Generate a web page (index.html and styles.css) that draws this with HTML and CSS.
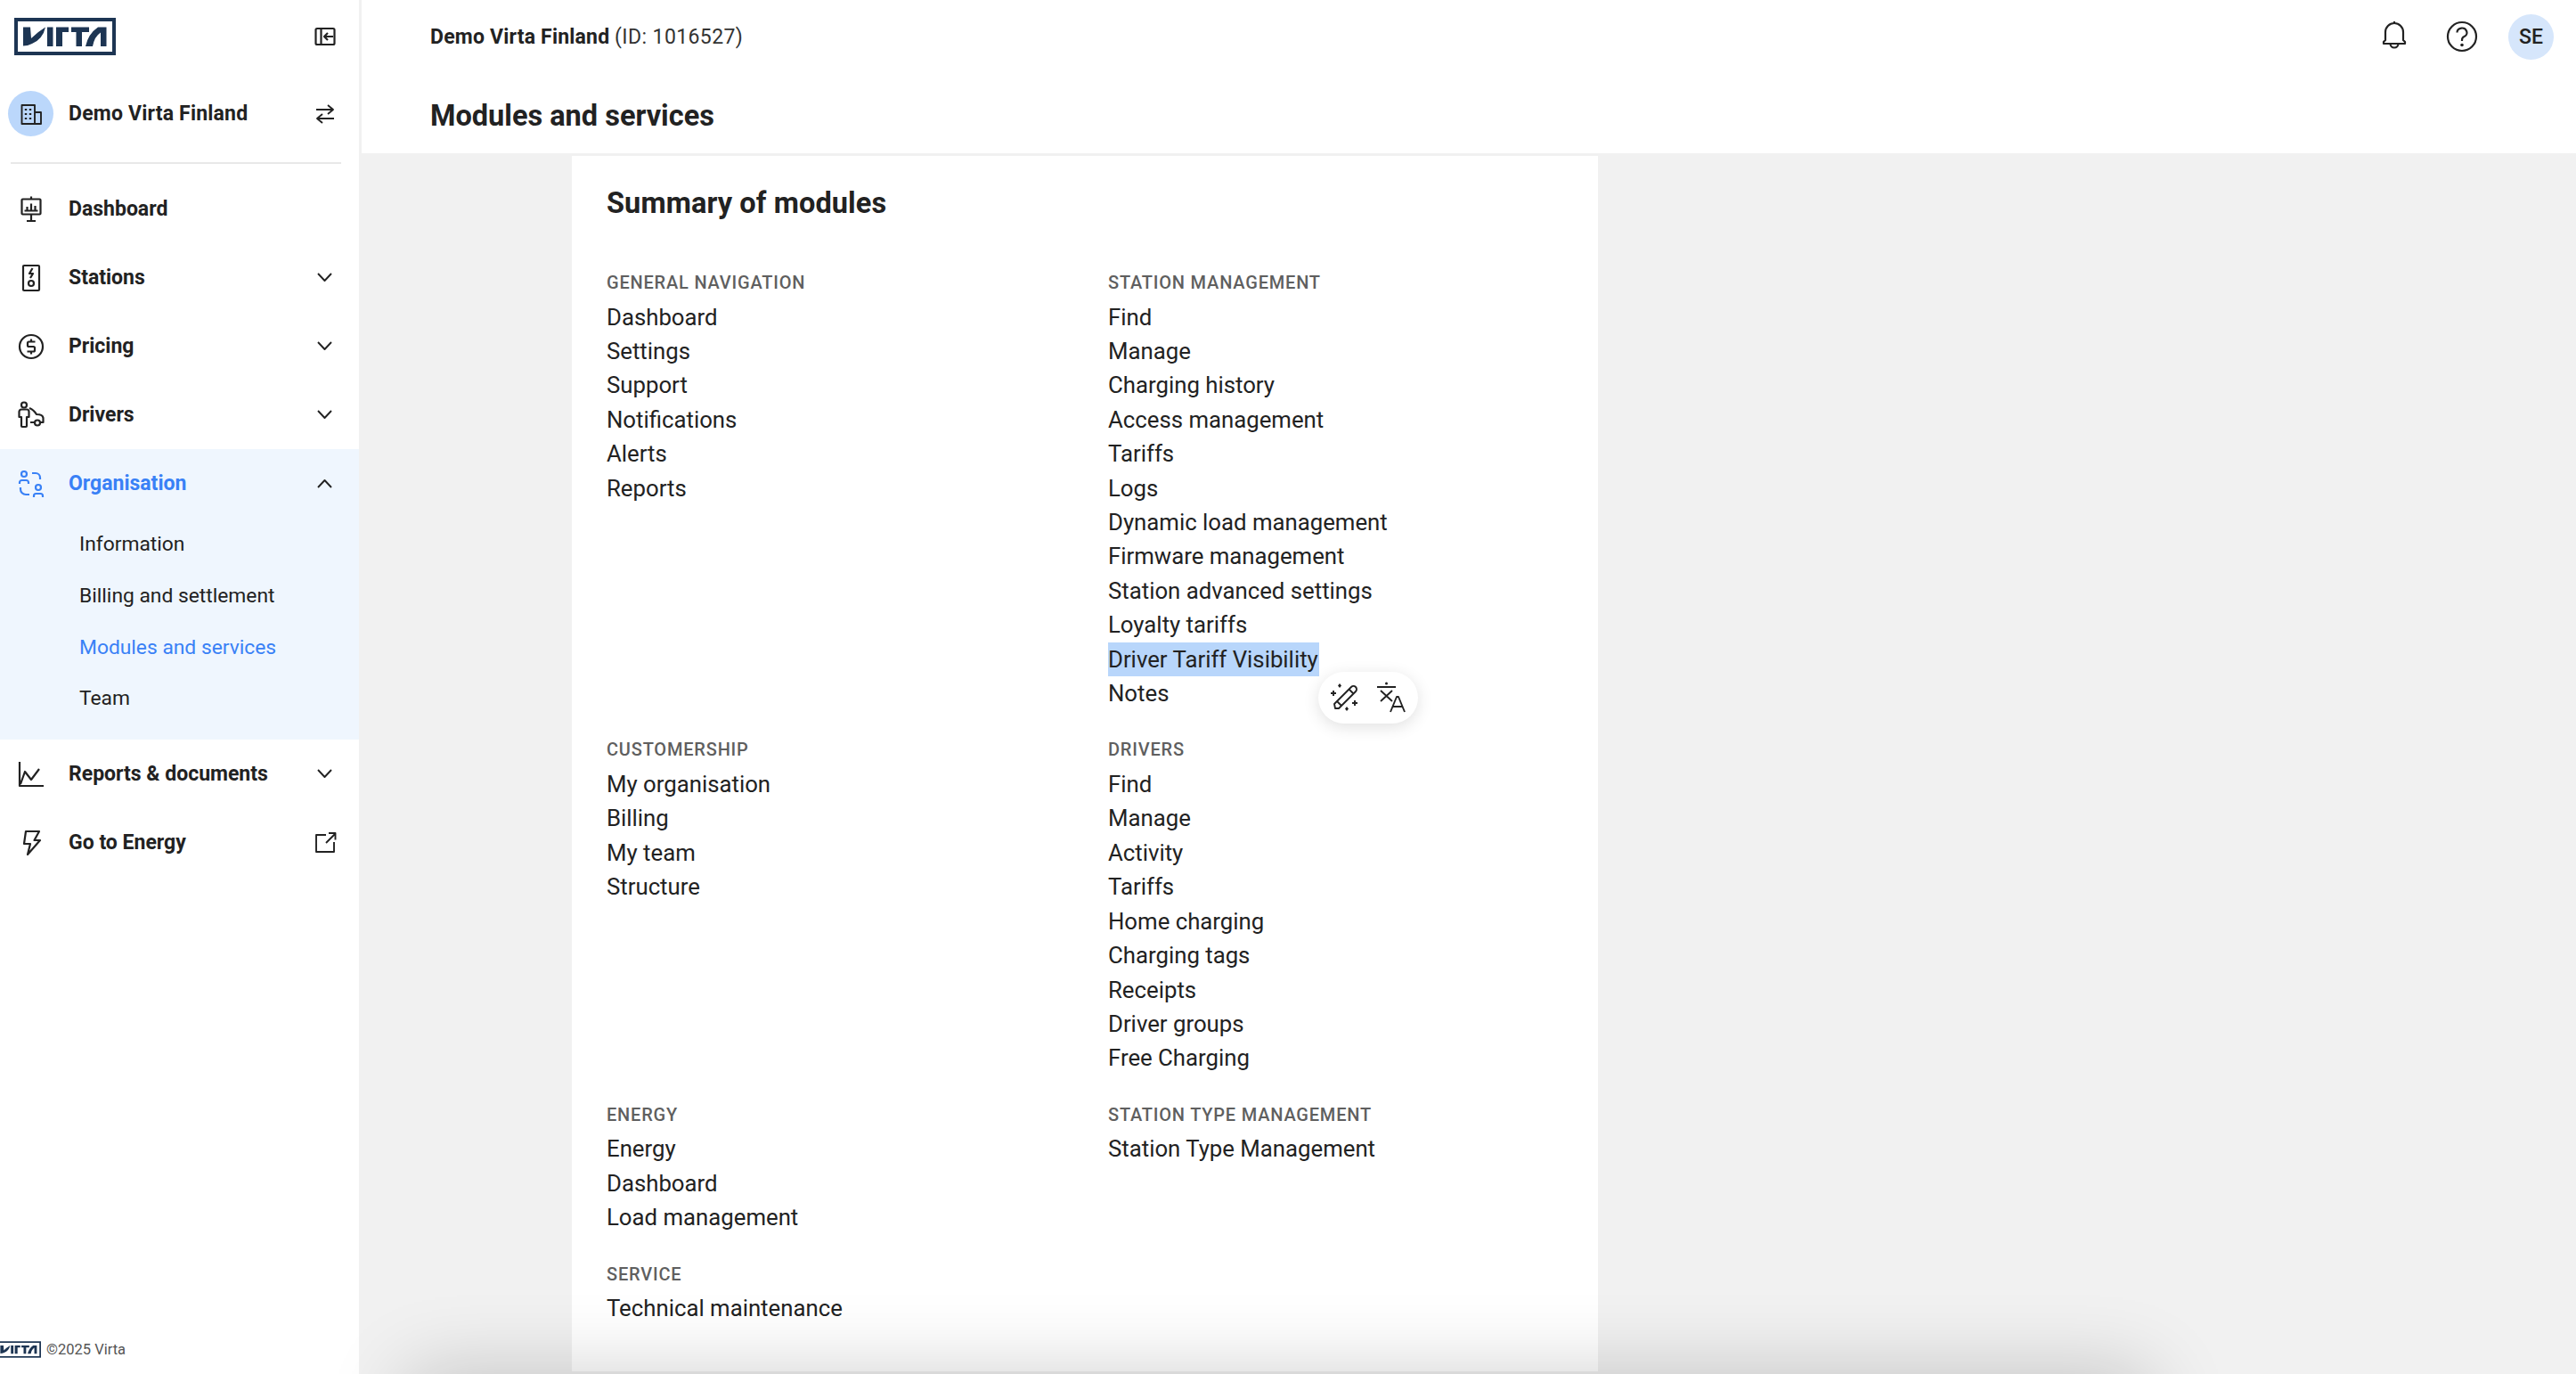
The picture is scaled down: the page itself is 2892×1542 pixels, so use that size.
FILE: index.html
```html
<!DOCTYPE html>
<html lang="en">
<head>
<meta charset="utf-8">
<title>Modules and services</title>
<link rel="stylesheet" href="styles.css">
</head>
<body>
<svg class="defs" aria-hidden="true"><symbol id="virta" viewBox="0 0 114 42"><rect x="2" y="2" width="110" height="38" fill="none" stroke="#1d3553" stroke-width="4"/><path fill="#1d3553" d="M10 10.500H18L19 23Q26 16 35 10.500 32 24 20 29 15 31.500 10 31.500ZM37 10.500H43.500V32H37ZM47 10.500H61V16H54V32H47ZM64 10.500H84V16H76V32H69.500V16H64ZM80 32Q83 18 94 10.500H103.500V32H97V16.500Q90 21 88 32Z"/></symbol></svg>
<div class="app">
  <aside class="sidebar">
    <div class="brand">
      <svg class="logo"><use href="#virta"/></svg>
      <svg class="i32" viewBox="0 0 32 32"><g class="st"><rect x="5.500" y="7" width="21" height="18" rx="1.500"/><path d="M11.500 7V25M25 16H15M19 12L15 16 19 20"/></g></svg>
    </div>
    <div class="org">
      <span class="org-badge"><svg class="i32" viewBox="0 0 32 32"><g class="st thin"><path d="M5.500 27V6H20V27ZM20 14H27V27H20Z"/><path class="dots" d="M10 10V12M15 10V12M10 15V17M15 15V17M10 20V22M15 20V22"/></g></svg></span>
      <span class="org-name">Demo Virta Finland</span>
      <svg class="i32" viewBox="0 0 32 32"><g class="st thin"><path d="M6 11H25M19 6L25 11 19 16M26 21H7M13 16L7 21 13 26"/></g></svg>
    </div>
    <div class="divider"></div>
    <nav class="nav">
      <a class="nav-item"><svg class="i32" viewBox="0 0 32 32"><g class="st"><rect x="5.500" y="4.500" width="21" height="17" rx="1"/><path d="M16 1.500V4.500M16 21.500V29M11 29H21M8.500 17.500H23.500M11.500 17V13M16 17V9.500M20.500 17V12"/></g></svg><span class="nav-label">Dashboard</span></a>
      <a class="nav-item"><svg class="i32" viewBox="0 0 32 32"><g class="st"><rect x="7" y="2" width="18" height="28" rx="1"/><path d="M17.500 5L14 11H18L15 16"/><circle cx="16" cy="22" r="3"/></g></svg><span class="nav-label">Stations</span><svg class="i32" viewBox="0 0 32 32"><path class="st thin" d="M8 11L15.500 19 23 11"/></svg></a>
      <a class="nav-item"><svg class="i32" viewBox="0 0 32 32"><g class="st"><circle cx="16" cy="16" r="13"/><path d="M20.500 10.500H13.500A1.500 1.500 0 0 0 12 12V14.500A1.500 1.500 0 0 0 13.500 16H18.500A1.500 1.500 0 0 1 20 17.500V20A1.500 1.500 0 0 1 18.500 21.500H11.500M16 7.500V10.500M16 21.500V24.500"/></g></svg><span class="nav-label">Pricing</span><svg class="i32" viewBox="0 0 32 32"><path class="st thin" d="M8 11L15.500 19 23 11"/></svg></a>
      <a class="nav-item"><svg class="i32" viewBox="0 0 32 32"><g class="st"><circle cx="8" cy="4.500" r="3"/><path d="M2.500 12A2.500 2.500 0 0 1 5 9.500H11A2.500 2.500 0 0 1 13.500 12V18H11V28A1 1 0 0 1 10 29H6A1 1 0 0 1 5 28V18H2.500ZM14 8Q19 10 22 15 29 15 29.500 19V24H26M15 24H20"/><circle cx="23" cy="24.500" r="3"/></g></svg><span class="nav-label">Drivers</span><svg class="i32" viewBox="0 0 32 32"><path class="st thin" d="M8 11L15.500 19 23 11"/></svg></a>
      <div class="nav-group">
        <a class="nav-item active"><svg class="i32" viewBox="0 0 32 32"><g class="st"><circle cx="8" cy="5" r="3"/><path d="M3 16V14.500A2.500 2.500 0 0 1 5.500 12H10.500A2.500 2.500 0 0 1 13 14.500V16M17 4H21A5 5 0 0 1 26 9V11M4 20V22A6 6 0 0 0 10 28H14"/><circle cx="24" cy="20" r="3"/><path d="M19 31V29.500A2.500 2.500 0 0 1 21.500 27H26.500A2.500 2.500 0 0 1 29 29.500V31"/></g></svg><span class="nav-label">Organisation</span><svg class="i32" viewBox="0 0 32 32"><path class="st thin dark" d="M8 20L15.500 12 23 20"/></svg></a>
        <ul class="subnav">
          <li>Information</li>
          <li>Billing and settlement</li>
          <li class="current">Modules and services</li>
          <li>Team</li>
        </ul>
      </div>
      <a class="nav-item"><svg class="i32" viewBox="0 0 32 32"><g class="st"><path d="M3 2V29H30M4 27L9 13 16 22 25 10"/></g></svg><span class="nav-label">Reports &amp; documents</span><svg class="i32" viewBox="0 0 32 32"><path class="st thin" d="M8 11L15.500 19 23 11"/></svg></a>
      <a class="nav-item"><svg class="i32" viewBox="0 0 32 32"><g class="st"><path d="M10 3H25L19.500 13H26L12 29 15 17H8Z"/></g></svg><span class="nav-label">Go to Energy</span><svg class="i32" viewBox="0 0 32 32"><g class="st thin"><path d="M17 7H6V26H26V15M17 16L27 6M20 5H27.500V12.500"/></g></svg></a>
    </nav>
    <footer class="side-foot">
      <svg class="logo-small"><use href="#virta"/></svg>
      <span class="copy">©2025 Virta</span>
    </footer>
  </aside>
  <div class="main">
    <header class="topbar">
      <div class="top-row">
        <div class="crumb"><b>Demo Virta Finland</b> <span class="crumb-id">(ID: 1016527)</span></div>
        <div class="top-actions">
          <svg class="i40" viewBox="0 0 40 40"><g class="st"><path d="M8 28V26L10 24V15A10 10 0 0 1 30 15V24L32 26V28ZM20 3V5M15.500 28A4.500 4.500 0 0 0 24.500 28"/></g></svg>
          <svg class="i40" viewBox="0 0 40 40"><g class="st"><circle cx="20" cy="20" r="16"/><path d="M14.500 15.500A5.500 5 0 1 1 22.500 20Q20 21 20 24V25"/></g><circle cx="20" cy="29.500" r="1.800" class="solid"/></svg>
          <span class="avatar">SE</span>
        </div>
      </div>
      <h1 class="page-title">Modules and services</h1>
    </header>
    <div class="content">
      <section class="card">
        <h2 class="card-title">Summary of modules</h2>
        <div class="groups">
          <div class="group"><h3>General navigation</h3><ul><li>Dashboard</li><li>Settings</li><li>Support</li><li>Notifications</li><li>Alerts</li><li>Reports</li></ul></div>
          <div class="group"><h3>Station management</h3><ul><li>Find</li><li>Manage</li><li>Charging history</li><li>Access management</li><li>Tariffs</li><li>Logs</li><li>Dynamic load management</li><li>Firmware management</li><li>Station advanced settings</li><li>Loyalty tariffs</li><li><span class="sel">Driver Tariff Visibility</span></li><li>Notes</li></ul></div>
          <div class="group"><h3>Customership</h3><ul><li>My organisation</li><li>Billing</li><li>My team</li><li>Structure</li></ul></div>
          <div class="group"><h3>Drivers</h3><ul><li>Find</li><li>Manage</li><li>Activity</li><li>Tariffs</li><li>Home charging</li><li>Charging tags</li><li>Receipts</li><li>Driver groups</li><li>Free Charging</li></ul></div>
          <div class="col-stack">
            <div class="group"><h3>Energy</h3><ul><li>Energy</li><li>Dashboard</li><li>Load management</li></ul></div>
            <div class="group"><h3>Service</h3><ul><li>Technical maintenance</li></ul></div>
          </div>
          <div class="group"><h3>Station type management</h3><ul><li>Station Type Management</li></ul></div>
        </div>
      </section>
    </div>
  </div>
</div>
<div class="popup">
  <svg class="i36" viewBox="0 0 36 36"><g class="st thin"><path d="M7 30L6 25 25 6A3 3 0 0 1 30 11L11 30ZM9 22L14 27M22.500 8.500L27.500 13.500"/><path d="M2 13H8M5 10V16M26 24H32M29 21V27"/></g><path class="solid" d="M12 2L14 4.500 12 7 10 4.500ZM20 28L22 30.500 20 33 18 30.500Z"/></svg>
  <svg class="i36" viewBox="0 0 36 36"><g class="st thin"><path d="M1 6H22M5 10L18 22M18 10L5 22M16 34L23 17H25L32 34M18.500 28H29.500"/></g><circle cx="11.500" cy="2" r="1.500" class="solid"/></svg>
</div>
<div class="bottom-shade"></div>
</body>
</html>
```
FILE: styles.css
```css
* { box-sizing: border-box; }
html, body { margin: 0; height: 100%; overflow: hidden; }
body { position: relative; font-family: Roboto, "Noto Sans", sans-serif; color: #222; background: #f1f1f1; }
ul { list-style: none; margin: 0; padding: 0; }
h1, h2, h3 { margin: 0; }
.defs { width: 0; height: 0; position: absolute; }

.i32 { width: 32px; height: 32px; flex: none; display: block; }
.i36 { width: 36px; height: 36px; flex: none; display: block; }
.i40 { width: 40px; height: 40px; flex: none; display: block; }
.st { fill: none; stroke: #222; stroke-width: 2.2; stroke-linejoin: round; stroke-linecap: butt; }
.st.thin { stroke-width: 1.9; }
.solid { fill: #222; }
.dots { stroke-width: 2.4; }

.app { display: flex; height: 100vh; }

.sidebar { width: 403px; flex: none; background: #fff; display: flex; flex-direction: column; }
.brand { height: 82px; display: flex; align-items: center; justify-content: space-between; padding: 0 22px 0 16px; }
.logo { width: 114px; height: 42px; display: block; }
.org { height: 100px; padding: 0 22px 9px 9px; display: flex; align-items: center; }
.org-badge { width: 51px; height: 51px; border-radius: 50%; background: #bbd7fb; display: flex; align-items: center; justify-content: center; flex: none; }
.org-name { flex: 1; margin-left: 17px; font-size: 23px; font-weight: 700; letter-spacing: .2px; }
.divider { height: 2px; margin: 0 20px 0 12px; background: #e8e8e8; flex: none; }
.nav { padding-top: 12px; flex: 1; }
.nav-item { height: 77px; display: flex; align-items: center; padding: 0 22px 0 19px; font-weight: 700; }
.nav-label { flex: 1; margin-left: 26px; font-size: 23px; }
.nav-group { background: #eff6fe; padding-bottom: 17px; }
.nav-item.active { color: #3981f6; }
.nav-item.active .st { stroke: #3981f6; }
.nav-item.active .st.dark { stroke: #222; }
.subnav { padding-left: 89px; font-size: 22.800px; margin-top: 1px; }
.subnav li { height: 57.800px; line-height: 57.800px; }
.subnav .current { color: #3981f6; }
.side-foot { display: flex; align-items: center; gap: 6px; height: 19px; margin-bottom: 18px; }
.logo-small { width: 50px; height: 19px; margin-left: -4px; flex: none; }
.copy { font-size: 16.500px; color: #555; }

.main { flex: 1; min-width: 0; margin-left: 3px; display: flex; flex-direction: column; }
.topbar { height: 172px; background: #fff; padding: 0 25px 0 77px; flex: none; }
.top-row { height: 82px; display: flex; align-items: center; justify-content: space-between; }
.crumb { font-size: 23px; }
.crumb b { font-weight: 700; letter-spacing: .2px; }
.crumb-id { color: #333; letter-spacing: .4px; }
.top-actions { display: flex; align-items: center; gap: 36px; }
.avatar { width: 51px; height: 51px; border-radius: 50%; background: #d6e6fb; display: flex; align-items: center; justify-content: center; font-size: 23px; font-weight: 500; margin-left: -4px; }
.page-title { font-size: 32.500px; font-weight: 700; line-height: 44px; margin-top: 26px; }

.content { flex: 1; min-height: 0; padding: 3px 0 3px 236px; }
.card { width: 1152px; height: 100%; background: #fff; padding: 33px 38px 0 39px; }
.card-title { font-size: 32.500px; font-weight: 700; line-height: 40px; margin-bottom: 51px; letter-spacing: .1px; }
.groups { display: grid; grid-template-columns: 563px 1fr; }
.group { margin-bottom: 26px; font-size: 25.750px; line-height: 38.400px; }
.group h3 { font-size: 20px; font-weight: 500; line-height: 37.600px; letter-spacing: .8px; text-transform: uppercase; color: #5f5f5f; }
.sel { background: #b8d6fb; display: inline-block; padding-right: 1px; }

.popup { position: absolute; left: 1480px; top: 754px; width: 112px; height: 58px; border-radius: 29px; background: #fff; box-shadow: 0 4px 18px rgba(0, 0, 0, .12); display: flex; align-items: center; justify-content: center; gap: 17px; }

.bottom-shade { position: absolute; left: 458px; top: 100%; width: 1955px; height: 300px; box-shadow: 0 0 85px rgba(0, 0, 0, .2); pointer-events: none; }
```
